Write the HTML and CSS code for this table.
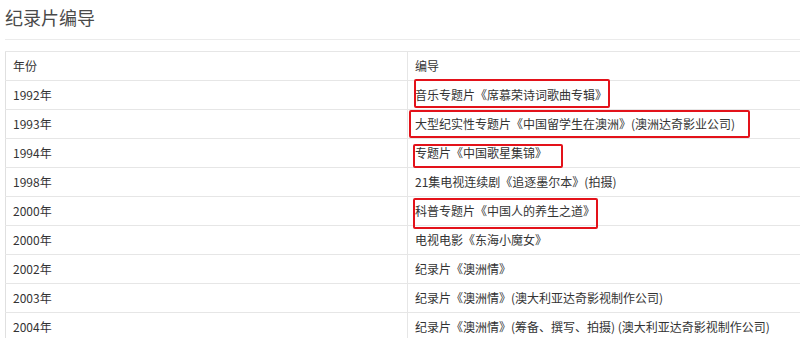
FILE: index.html
```html
<!DOCTYPE html>
<html lang="zh">
<head>
<meta charset="utf-8">
<link rel="stylesheet" href="styles.css">
</head>
<body>
<div class="page">
  <h2 class="title">纪录片编导</h2>
  <table class="list">
    <thead>
      <tr><th class="c1">年份</th><th>编导</th></tr>
    </thead>
    <tbody>
      <tr><td class="c1">1992年</td><td><span class="mark m1">音乐专题片《席慕荣诗词歌曲专辑》</span></td></tr>
      <tr><td class="c1">1993年</td><td><span class="mark m2">大型纪实性专题片《中国留学生在澳洲》(澳洲达奇影业公司)</span></td></tr>
      <tr><td class="c1">1994年</td><td><span class="mark m3">专题片《中国歌星集锦》</span></td></tr>
      <tr><td class="c1">1998年</td><td>21集电视连续剧《追逐墨尔本》(拍摄)</td></tr>
      <tr><td class="c1">2000年</td><td><span class="mark m4">科普专题片《中国人的养生之道》</span></td></tr>
      <tr><td class="c1">2000年</td><td>电视电影《东海小魔女》</td></tr>
      <tr><td class="c1">2002年</td><td>纪录片《澳洲情》</td></tr>
      <tr><td class="c1">2003年</td><td>纪录片《澳洲情》(澳大利亚达奇影视制作公司)</td></tr>
      <tr><td class="c1">2004年</td><td>纪录片《澳洲情》(筹备、撰写、拍摄) (澳大利亚达奇影视制作公司)</td></tr>
    </tbody>
  </table>
</div>
</body>
</html>
```

FILE: styles.css
```css
html, body {
  margin: 0;
  padding: 0;
  background: #fff;
  overflow: hidden;
}
body {
  font-family: "Noto Sans CJK SC", "Microsoft YaHei", "Liberation Sans", sans-serif;
  color: #333;
}
.page {
  padding-left: 5px;
}
.title {
  margin: 0;
  height: 40px;
  box-sizing: border-box;
  padding-top: 5px;
  font-size: 18px;
  line-height: 24px;
  font-weight: normal;
  color: #4a4a4a;
  border-bottom: 1px solid #ebebeb;
}
.list {
  margin-top: 11px;
  width: 100%;
  border-collapse: collapse;
  font-size: 12px;
  line-height: 16px;
}
.list th, .list td {
  height: 28px;
  padding: 0 0 0 7px;
  text-align: left;
  font-weight: normal;
  border-top: 1px solid #e6e6e6;
  border-bottom: 1px solid #e6e6e6;
  white-space: nowrap;
  vertical-align: middle;
}
.list .c1 {
  width: 394px;
  border-left: 1px solid #e0e0e0;
  border-right: 1px solid #e6e6e6;
}
.mark {
  position: relative;
  display: inline-block;
}
.mark::after {
  content: "";
  position: absolute;
  border: 2px solid #e3121a;
  border-radius: 2px;
}
.m1::after { left: -1px; right: -3px; top: -8px; bottom: -5px; }
.m2::after { left: -6px; right: -15px; top: -6px; bottom: -6px; }
.m3::after { left: -2px; right: -16px; top: -1px; bottom: -7px; }
.m4::after { left: -2px; right: -3px; top: -5px; bottom: -10px; }
```
